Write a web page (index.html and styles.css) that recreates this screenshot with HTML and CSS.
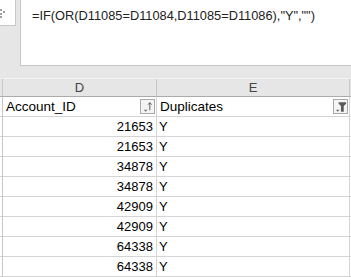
FILE: index.html
```html
<!DOCTYPE html>
<html lang="en">
<head>
  <meta charset="UTF-8">
  <title>Duplicates</title>
  <link rel="stylesheet" href="styles.css">
</head>
<body>
  <div class="formula-bar">
    <div class="name-box">
      <svg class="grip" width="6" height="12" viewBox="0 0 6 12">
        <rect x="0" y="2" width="2" height="2" fill="#a0a0a0"/>
        <rect x="0" y="6" width="2" height="2" fill="#a0a0a0"/>
        <rect x="3" y="4" width="2" height="2" fill="#a0a0a0"/>
        <rect x="0" y="9" width="2" height="2" fill="#a0a0a0"/>
      </svg>
    </div>
    <div class="formula-input">=IF(OR(D11085=D11084,D11085=D11086),"Y","")</div>
  </div>

  <div class="sheet">
    <div class="row col-heads">
      <div class="cell gutter"></div>
      <div class="cell head">D</div>
      <div class="cell head">E</div>
      <div class="cell tail"></div>
    </div>

    <div class="row">
      <div class="cell gutter"></div>
      <div class="cell title">
        <span>Account_ID</span>
        <span class="filter-btn">
          <svg width="14" height="14" viewBox="0 0 14 14">
            <path d="M3 10h4l-2 2z" fill="#6b6b6b"/>
            <path d="M9.5 2.5v8" stroke="#555" stroke-width="1"/>
            <path d="M7.5 4.5l2-2.2 2 2.2" stroke="#555" stroke-width="1" fill="none"/>
          </svg>
        </span>
      </div>
      <div class="cell title">
        <span>Duplicates</span>
        <span class="filter-btn">
          <svg width="14" height="14" viewBox="0 0 14 14">
            <path d="M2 10h4l-2 2z" fill="#6b6b6b"/>
            <path d="M5 2h8v1.5l-2.5 2.5v6h-3v-6l-2.5-2.5z" fill="#5a5a5a"/>
          </svg>
        </span>
      </div>
      <div class="cell tail"></div>
    </div>

    <div class="row"><div class="cell gutter"></div><div class="cell num">21653</div><div class="cell txt">Y</div><div class="cell tail"></div></div>
    <div class="row"><div class="cell gutter"></div><div class="cell num">21653</div><div class="cell txt">Y</div><div class="cell tail"></div></div>
    <div class="row"><div class="cell gutter"></div><div class="cell num">34878</div><div class="cell txt">Y</div><div class="cell tail"></div></div>
    <div class="row"><div class="cell gutter"></div><div class="cell num">34878</div><div class="cell txt">Y</div><div class="cell tail"></div></div>
    <div class="row"><div class="cell gutter"></div><div class="cell num">42909</div><div class="cell txt">Y</div><div class="cell tail"></div></div>
    <div class="row"><div class="cell gutter"></div><div class="cell num">42909</div><div class="cell txt">Y</div><div class="cell tail"></div></div>
    <div class="row"><div class="cell gutter"></div><div class="cell num">64338</div><div class="cell txt">Y</div><div class="cell tail"></div></div>
    <div class="row"><div class="cell gutter"></div><div class="cell num">64338</div><div class="cell txt">Y</div><div class="cell tail"></div></div>
  </div>
</body>
</html>
```

FILE: styles.css
```css
body {
  margin: 0;
  background-color: #e6e6e6;
  font-family: "Liberation Sans", Arial, sans-serif;
  color: #000;
  overflow: hidden;
}

.formula-bar {
  display: flex;
  align-items: flex-start;
  height: 66px;
  margin-bottom: 12px;
}

.name-box {
  width: 16px;
  height: 26px;
  box-sizing: border-box;
  background-color: #fff;
  border: 1px solid #c6c6c6;
  border-top: none;
  border-left: none;
  display: flex;
  align-items: center;
}

.formula-input {
  flex: 1;
  height: 66px;
  margin-left: 4px;
  box-sizing: border-box;
  background-color: #fff;
  border: 1px solid #c6c6c6;
  border-top: none;
  border-right: none;
  padding: 8px 0 0 11px;
  font-size: 12.8px;
  color: #222;
}

.sheet {
  background-color: #fff;
}

.row {
  display: grid;
  grid-template-columns: 3px 154px 193px 1fr;
  height: 20px;
}

.cell {
  box-sizing: border-box;
  border-right: 1px solid #d4d4d4;
  border-bottom: 1px solid #d4d4d4;
  font-size: 13px;
  line-height: 19px;
  white-space: nowrap;
  overflow: hidden;
}

.gutter {
  background-color: #fff;
  border-right-color: #c6c6c6;
}

.tail {
  border-right: none;
}

.col-heads {
  height: 19px;
  background-color: #e6e6e6;
  border-top: 1px solid #f2f2f2;
  box-sizing: border-box;
}

.col-heads .cell {
  border-right-color: #c6c6c6;
  border-bottom-color: #ababab;
  line-height: 17px;
  text-align: center;
  color: #444;
  font-size: 13px;
}

.col-heads .gutter {
  background-color: #e6e6e6;
}

.title {
  display: flex;
  align-items: center;
  justify-content: space-between;
  padding-left: 3px;
  font-size: 13.5px;
}

.filter-btn {
  width: 15px;
  height: 15px;
  box-sizing: border-box;
  border: 1px solid #a9a9a9;
  background-color: #f4f4f4;
  display: flex;
  align-items: center;
  justify-content: center;
  margin-right: 1px;
}

.num {
  text-align: right;
  padding-right: 3px;
}

.txt {
  padding-left: 2px;
}
```
